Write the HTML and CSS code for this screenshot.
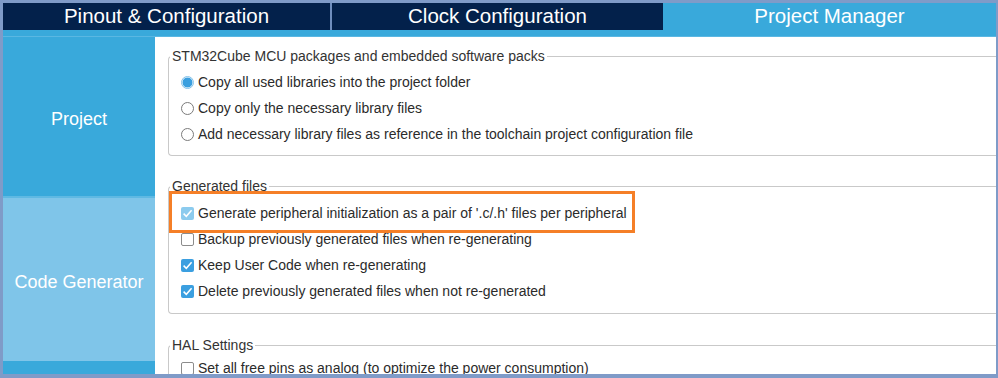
FILE: index.html
```html
<!DOCTYPE html>
<html lang="en">
<head>
  <meta charset="UTF-8" />
  <title>Project Manager</title>
  <link rel="stylesheet" href="styles.css">
</head>
<body>
  <div class="frame">
    <!-- Top tabs -->
    <div class="tabs">
      <div class="tab">Pinout &amp; Configuration</div>
      <div class="tab-sep"></div>
      <div class="tab">Clock Configuration</div>
      <div class="tab active">Project Manager</div>
    </div>
    <div class="strip"></div>

    <div class="main">
      <!-- Left menu -->
      <div class="side">
        <div class="side-item project">Project</div>
        <div class="side-item current">Code Generator</div>
        <div class="side-item rest"></div>
      </div>

      <!-- Settings panel -->
      <div class="panel">
        <fieldset class="group packs">
          <legend>STM32Cube MCU packages and embedded software packs</legend>
          <div class="row"><span class="radio on"></span>Copy all used libraries into the project folder</div>
          <div class="row"><span class="radio"></span>Copy only the necessary library files</div>
          <div class="row"><span class="radio"></span>Add necessary library files as reference in the toolchain project configuration file</div>
        </fieldset>

        <fieldset class="group files">
          <legend>Generated files</legend>
          <div class="row marked">
            <span class="check on faded"><svg viewBox="0 0 13 13"><path d="M2.6 6.6 L5.3 9.3 L10.6 3.2" /></svg></span>Generate peripheral initialization as a pair of '.c/.h' files per peripheral
          </div>
          <div class="row"><span class="check"></span>Backup previously generated files when re-generating</div>
          <div class="row">
            <span class="check on"><svg viewBox="0 0 13 13"><path d="M2.6 6.6 L5.3 9.3 L10.6 3.2" /></svg></span>Keep User Code when re-generating
          </div>
          <div class="row">
            <span class="check on"><svg viewBox="0 0 13 13"><path d="M2.6 6.6 L5.3 9.3 L10.6 3.2" /></svg></span>Delete previously generated files when not re-generated
          </div>
        </fieldset>

        <fieldset class="group hal">
          <legend>HAL Settings</legend>
          <div class="row"><span class="check"></span>Set all free pins as analog (to optimize the power consumption)</div>
        </fieldset>
      </div>
    </div>
  </div>
</body>
</html>
```

FILE: styles.css
```css
/* ====== Page / outer frame ====== */
body {
  margin: 0;
  background: #7f9bc8;
  font-family: "Liberation Sans", Arial, sans-serif;
}

.frame {
  width: 998px;
  height: 378px;
  box-sizing: border-box;
  padding: 3px 2px 4px 3px;
  display: flex;
  flex-direction: column;
  overflow: hidden;
}

/* ====== Tabs ====== */
.tabs {
  display: grid;
  grid-template-columns: 327px 2px 331px 333px;
  height: 27px;
}
.tab {
  background: #03214b;
  color: #fff;
  font-size: 20.5px;
  line-height: 26px;
  text-align: center;
}
.tab.active {
  background: #39a9db;
}
.tab-sep {
  background: #6f8ebe;
}
.strip {
  height: 6px;
  background: #39a9db;
  border-bottom: 1px solid #5ab7e2;
}

/* ====== Body ====== */
.main {
  flex: 1;
  display: flex;
  min-height: 0;
}

.side {
  width: 152px;
  flex-shrink: 0;
  display: flex;
  flex-direction: column;
}
.side-item {
  display: flex;
  align-items: center;
  justify-content: center;
  box-sizing: border-box;
  padding-top: 5px;
  color: #fff;
  font-size: 18px;
  background: #39a9db;
}
.side-item.project {
  height: 161px;
  border-bottom: 2px solid #5fb9e3;
}
.side-item.current {
  height: 163px;
  background: #7fc5e9;
}
.side-item.rest {
  flex: 1;
}

.panel {
  flex: 1;
  min-width: 0;
  background: #fff;
  padding-left: 13px;
  overflow: hidden;
  color: #2b2b2b;
  font-size: 14px;
}

/* ====== Groups (right edge runs off the panel) ====== */
.group {
  min-width: 0;
  margin: 0;
  padding: 0;
  border: 1px solid #c9c9c9;
  border-right: none;
  border-radius: 4px 0 0 4px;
}
.group legend {
  padding: 0 2px;
  margin-left: 1px;
  line-height: 16px;
  color: #333;
}
.packs {
  margin-top: 11px;
  padding: 5px 0 8px;
}
.files {
  margin-top: 22px;
  padding: 6px 0 9px;
}
.hal {
  margin-top: 23px;
  padding-top: 2px;
}

.row {
  display: flex;
  align-items: center;
  height: 26px;
  padding-left: 12px;
  white-space: nowrap;
}
.row.marked {
  position: relative;
}
/* orange highlight drawn over the first option */
.row.marked::after {
  content: "";
  position: absolute;
  top: -9px;
  bottom: -7px;
  left: 0;
  width: 460px;
  border: 3px solid #f57f27;
}

/* ====== Radio / checkbox ====== */
.radio,
.check {
  width: 13px;
  height: 13px;
  box-sizing: border-box;
  margin-right: 4px;
  flex-shrink: 0;
  background: #fff;
  border: 1px solid #7b7b7b;
}
.radio {
  border-radius: 50%;
}
.radio.on {
  border-color: #86c3ea;
  background: radial-gradient(circle, #3a9fdf 0 4.6px, #d7ecf9 5.2px);
}
.check {
  border-radius: 2px;
  border-color: #8c8c8c;
}
.check.on {
  border: none;
  background: #3b9fe0;
}
.check.faded {
  background: #8ccbee;
}
.check svg {
  display: block;
  width: 13px;
  height: 13px;
}
.check path {
  fill: none;
  stroke: #fff;
  stroke-width: 1.5;
}
```
